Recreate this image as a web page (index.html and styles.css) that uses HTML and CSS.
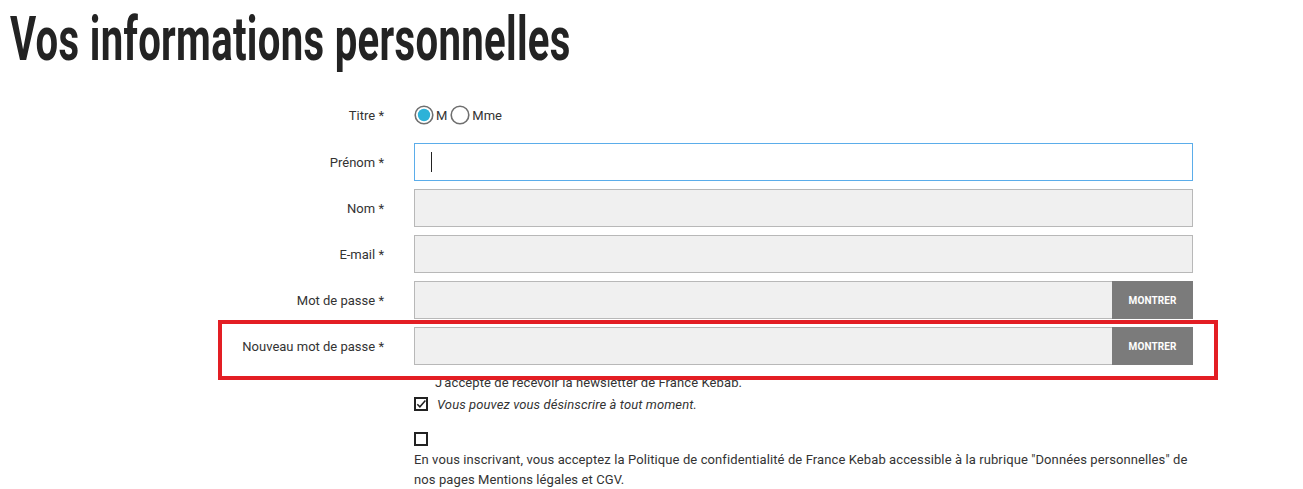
FILE: index.html
```html
<!DOCTYPE html>
<html lang="fr">
<head>
<meta charset="utf-8">
<title>Vos informations personnelles</title>
<link rel="stylesheet" href="styles.css">
</head>
<body>
<div class="page">
  <h1 class="title"><span class="title-text">Vos informations personnelles</span></h1>
  <form class="form">
    <div class="label label-titre">Titre *</div>
    <div class="radios">
      <span class="radio">
        <svg width="20" height="20" viewBox="0 0 20 20"><circle cx="10" cy="10" r="8.8" fill="#fff" stroke="#6f6f6f" stroke-width="1.6"/><circle cx="10" cy="10" r="6.2" fill="#2db2d8"/></svg>
        <span>M</span>
      </span>
      <span class="radio">
        <svg width="20" height="20" viewBox="0 0 20 20"><circle cx="10" cy="10" r="8.8" fill="#fff" stroke="#6f6f6f" stroke-width="1.6"/></svg>
        <span>Mme</span>
      </span>
    </div>

    <div class="label">Prénom *</div>
    <div class="field focused"><span class="caret"></span></div>

    <div class="label">Nom *</div>
    <div class="field"></div>

    <div class="label">E-mail *</div>
    <div class="field"></div>

    <div class="label">Mot de passe *</div>
    <div class="field with-btn"><span class="fill"></span><span class="btn">MONTRER</span></div>

    <div class="label">Nouveau mot de passe *</div>
    <div class="field with-btn"><span class="fill"></span><span class="btn">MONTRER</span></div>

    <div class="spacer"></div>
    <div class="consents">
      <p class="newsletter">J'accepte de recevoir la newsletter de France Kebab.</p>
      <div class="check-row">
        <span class="box checked">
          <svg width="14" height="14" viewBox="0 0 14 14"><rect x="1" y="1" width="12" height="12" fill="#fff" stroke="#222" stroke-width="2"/><path d="M3.3 7.2 L5.9 9.8 L11.4 3.6" fill="none" stroke="#222" stroke-width="1.5"/></svg>
        </span>
        <em>Vous pouvez vous désinscrire à tout moment.</em>
      </div>
      <div class="check-row second">
        <span class="box">
          <svg width="14" height="14" viewBox="0 0 14 14"><rect x="1" y="1" width="12" height="12" fill="#fff" stroke="#222" stroke-width="2"/></svg>
        </span>
      </div>
      <p class="legal">En vous inscrivant, vous acceptez la Politique de confidentialité de France Kebab accessible à la rubrique "Données personnelles" de nos pages Mentions légales et CGV.</p>
    </div>
  </form>
  <div class="highlight"></div>
</div>
</body>
</html>
```

FILE: styles.css
```css
html, body {
  margin: 0;
  padding: 0;
  background: #fff;
}
body {
  font-family: "Roboto", "Liberation Sans", sans-serif;
  color: #333;
  font-size: 13px;
}
.page {
  position: relative;
  width: 1303px;
  height: 489px;
  overflow: hidden;
}
.title {
  margin: 0;
  padding: 5px 0 0 10px;
  height: 78px;
  box-sizing: border-box;
  font-family: "Roboto", "DejaVu Sans", sans-serif;
  font-weight: 700;
  font-size: 61px;
  line-height: 68px;
  color: #232323;
  white-space: nowrap;
}
.title-text {
  display: inline-block;
  transform: scaleX(0.657);
  transform-origin: left center;
  letter-spacing: 0.5px;
}
.form {
  display: grid;
  grid-template-columns: 384px 779px;
  column-gap: 30px;
  row-gap: 8px;
  margin-top: 27px;
}
.label {
  display: flex;
  align-items: center;
  justify-content: flex-end;
  height: 38px;
  color: #333;
  font-size: 13px;
}
.label-titre {
  height: 20px;
}
.radios {
  display: flex;
  align-items: center;
  height: 20px;
  gap: 3px;
  margin-bottom: 10px;
}
.radio {
  display: inline-flex;
  align-items: center;
  gap: 2px;
  font-size: 13px;
  color: #333;
}
.radio svg {
  display: block;
}
.field {
  height: 38px;
  box-sizing: border-box;
  background: #f0f0f0;
  border: 1px solid #b8b8b8;
  display: flex;
  align-items: center;
}
.field.focused {
  background: #fff;
  border-color: #5badea;
}
.caret {
  display: block;
  width: 1px;
  height: 20px;
  background: #222;
  margin-left: 16px;
}
.field.with-btn {
  align-items: stretch;
  border-right: none;
}
.fill {
  flex: 1;
}
.btn {
  width: 81px;
  margin: -1px 0;
  background: #7b7b7b;
  color: #fff;
  font-size: 10px;
  font-weight: 700;
  display: flex;
  align-items: center;
  justify-content: center;
  letter-spacing: 0.1px;
}
.spacer {
  height: 1px;
}
.consents {
  margin-top: -8px;
  letter-spacing: 0.1px;
}
.consents p {
  margin: 0;
}
.newsletter {
  padding-left: 21px;
  line-height: 18px;
  margin-top: 9px !important;
}
.check-row {
  display: flex;
  align-items: center;
  gap: 9px;
  height: 18px;
  margin-top: 3px;
}
.check-row .box svg {
  display: block;
}
.check-row em {
  font-style: italic;
}
.check-row.second {
  margin-top: 17px;
}
.legal {
  width: 779px;
  line-height: 20px;
  margin-top: 2px !important;
}
.highlight {
  position: absolute;
  left: 218px;
  top: 320px;
  width: 1000px;
  height: 60px;
  box-sizing: border-box;
  border: 4px solid #e31e24;
  pointer-events: none;
}
```
